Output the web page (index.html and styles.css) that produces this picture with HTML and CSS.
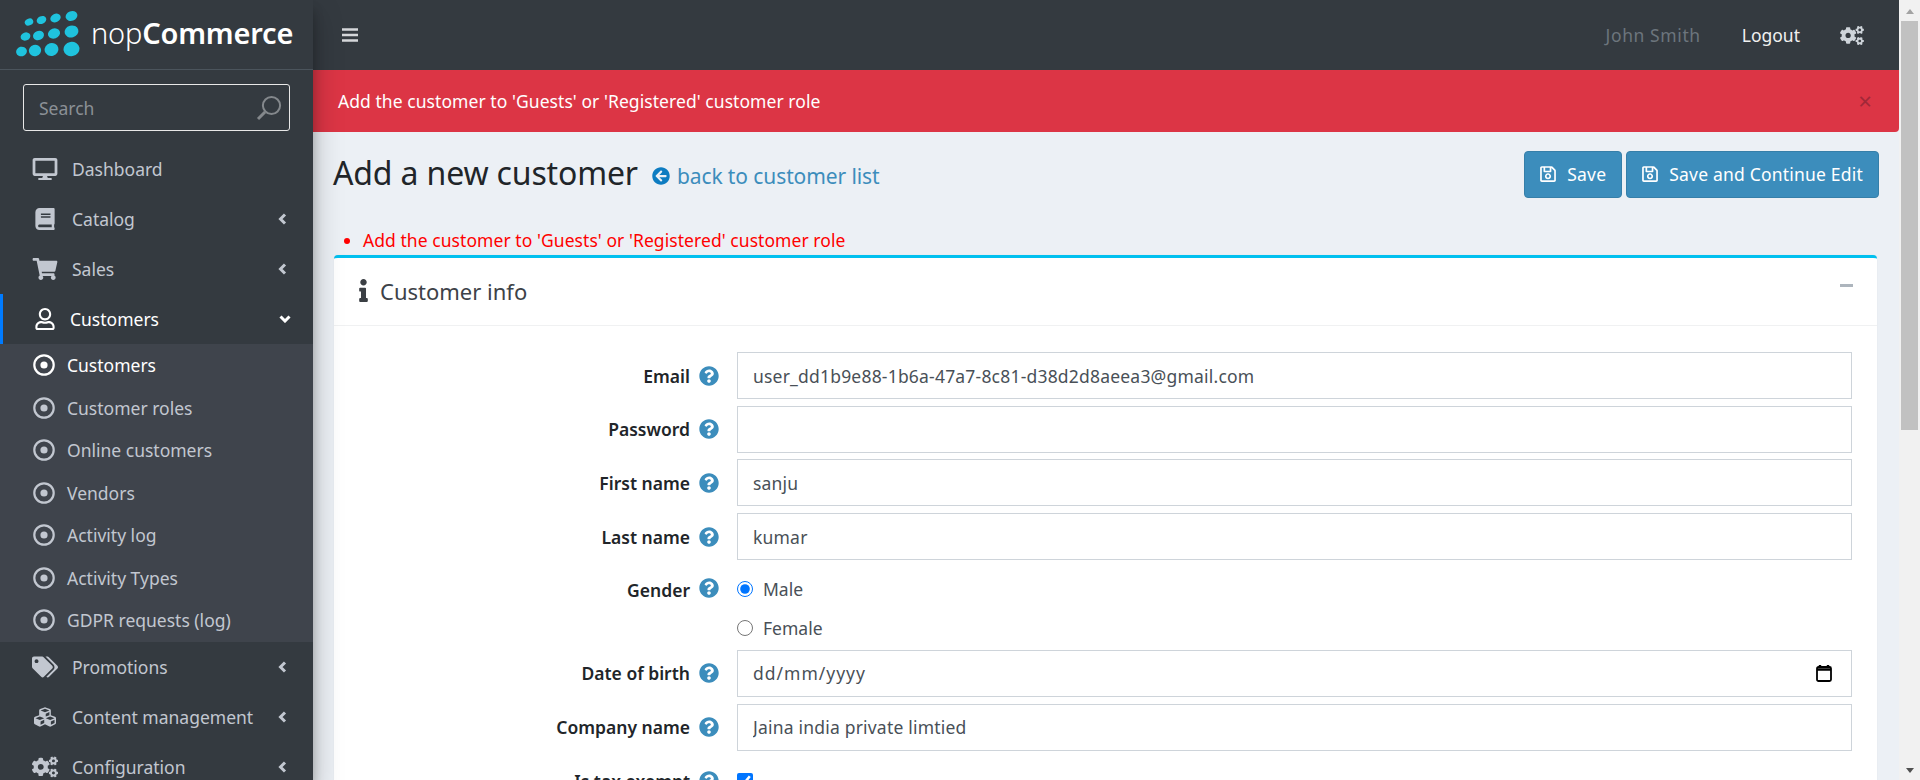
FILE: index.html
```html
<!DOCTYPE html>
<html lang="en">
<head>
    <meta charset="UTF-8">
    <meta name="viewport" content="width=device-width, initial-scale=1.0">
    <title>Add a new customer</title>
    <link rel="stylesheet" href="styles.css">
</head>
<body>
    <svg class="icon-sheet" xmlns="http://www.w3.org/2000/svg">
        <symbol id="i-desktop" viewBox="0 0 576 512"><path d="M528 0H48C21.5 0 0 21.5 0 48v320c0 26.5 21.5 48 48 48h192l-16 48h-72c-13.3 0-24 10.7-24 24s10.7 24 24 24h272c13.3 0 24-10.7 24-24s-10.7-24-24-24h-72l-16-48h192c26.5 0 48-21.5 48-48V48c0-26.5-21.5-48-48-48zm-16 352H64V64h448v288z"/></symbol>
        <symbol id="i-book" viewBox="0 0 448 512"><path d="M448 360V24c0-13.3-10.7-24-24-24H96C43 0 0 43 0 96v320c0 53 43 96 96 96h328c13.3 0 24-10.7 24-24v-16c0-7.5-3.5-14.3-8.9-18.7-4.2-15.4-4.2-59.3 0-74.7 5.4-4.3 8.9-11.1 8.9-18.6zM128 134c0-3.3 2.7-6 6-6h212c3.3 0 6 2.7 6 6v20c0 3.3-2.7 6-6 6H134c-3.3 0-6-2.7-6-6v-20zm0 64c0-3.3 2.7-6 6-6h212c3.3 0 6 2.7 6 6v20c0 3.3-2.7 6-6 6H134c-3.3 0-6-2.7-6-6v-20zm253.4 250H96c-17.7 0-32-14.3-32-32 0-17.6 14.4-32 32-32h285.4c-1.9 17.1-1.9 46.9 0 64z"/></symbol>
        <symbol id="i-cart" viewBox="0 0 576 512"><path d="M528.12 301.319l47.273-208C578.806 78.301 567.391 64 551.99 64H159.208l-9.166-44.81C147.758 8.021 137.93 0 126.529 0H24C10.745 0 0 10.745 0 24v16c0 13.255 10.745 24 24 24h69.883l70.248 343.435C147.325 417.1 136 435.222 136 456c0 30.928 25.072 56 56 56s56-25.072 56-56c0-15.674-6.447-29.835-16.824-40h209.647C430.447 426.165 424 440.326 424 456c0 30.928 25.072 56 56 56s56-25.072 56-56c0-22.172-12.888-41.332-31.579-50.405l5.517-24.276c3.413-15.018-8.002-29.319-23.403-29.319H218.117l-6.545-32h293.145c11.206 0 20.92-7.754 23.403-18.681z"/></symbol>
        <symbol id="i-user" viewBox="0 0 448 512"><path d="M313.6 304c-28.7 0-42.5 16-89.6 16-47.1 0-60.8-16-89.6-16C60.2 304 0 364.2 0 438.4V464c0 26.5 21.5 48 48 48h352c26.5 0 48-21.5 48-48v-25.6c0-74.2-60.2-134.4-134.4-134.4zM400 464H48v-25.6c0-47.6 38.8-86.4 86.4-86.4 14.6 0 38.3 16 89.6 16 51.7 0 74.9-16 89.6-16 47.6 0 86.4 38.8 86.4 86.4V464zM224 288c79.5 0 144-64.5 144-144S303.5 0 224 0 80 64.5 80 144s64.5 144 144 144zm0-240c52.9 0 96 43.1 96 96s-43.1 96-96 96-96-43.1-96-96 43.1-96 96-96z"/></symbol>
        <symbol id="i-tags" viewBox="0 0 640 512"><path d="M497.941 225.941L286.059 14.059A48 48 0 0 0 252.118 0H48C21.49 0 0 21.49 0 48v204.118a48 48 0 0 0 14.059 33.941l211.882 211.882c18.744 18.745 49.136 18.746 67.882 0l204.118-204.118c18.745-18.745 18.745-49.137 0-67.882zM112 160c-26.51 0-48-21.49-48-48s21.49-48 48-48 48 21.49 48 48-21.49 48-48 48zm513.941 133.823L421.823 497.941c-18.745 18.745-49.137 18.745-67.882 0l-.36-.36L527.64 323.522c16.999-16.999 26.36-39.6 26.36-63.64s-9.362-46.641-26.36-63.64L331.397 0h48.721a48 48 0 0 1 33.941 14.059l211.882 211.882c18.745 18.745 18.745 49.137 0 67.882z"/></symbol>
        <symbol id="i-cubes" viewBox="0 0 512 512"><path d="M488.6 250.2L392 214V105.5c0-15-9.3-28.4-23.4-33.7l-100-37.5c-8.1-3.1-17.1-3.1-25.3 0l-100 37.5c-14.1 5.3-23.4 18.7-23.4 33.7V214l-96.6 36.2C9.3 255.5 0 268.9 0 283.9V394c0 13.6 7.7 26.1 19.9 32.2l100 50c10.1 5.1 22.1 5.1 32.2 0l103.9-52 103.9 52c10.1 5.1 22.1 5.1 32.2 0l100-50c12.2-6.1 19.9-18.6 19.9-32.2V283.9c0-15-9.3-28.4-23.4-33.7zM358 214.8l-85 31.9v-68.2l85-37v73.3zM154 104.1l102-38.2 102 38.2v.6l-102 41.4-102-41.4v-.6zm84 291.1l-85 42.5v-79.1l85-38.8v75.4zm0-112l-102 41.4-102-41.4v-.6l102-38.2 102 38.2v.6zm240 112l-85 42.5v-79.1l85-38.8v75.4zm0-112l-102 41.4-102-41.4v-.6l102-38.2 102 38.2v.6z"/></symbol>
        <symbol id="i-cogs" viewBox="0 0 640 512"><path d="M512.1 191l-8.2 14.3c-3 5.3-9.4 7.5-15.1 5.4-11.8-4.4-22.6-10.7-32.1-18.6-4.6-3.8-5.8-10.5-2.8-15.7l8.2-14.3c-6.9-8-12.3-17.3-15.9-27.4h-16.5c-6 0-11.2-4.3-12.2-10.3-2-12-2.1-24.6 0-37.1 1-6 6.2-10.4 12.2-10.4h16.5c3.6-10.1 9-19.4 15.9-27.4l-8.2-14.3c-3-5.2-1.9-11.9 2.8-15.7 9.5-7.9 20.4-14.2 32.1-18.6 5.7-2.1 12.1.1 15.1 5.4l8.2 14.3c10.5-1.9 21.2-1.9 31.7 0L552 6.3c3-5.3 9.4-7.5 15.1-5.4 11.8 4.4 22.6 10.7 32.1 18.6 4.6 3.8 5.8 10.5 2.8 15.7l-8.2 14.3c6.9 8 12.3 17.3 15.9 27.4h16.5c6 0 11.2 4.3 12.2 10.3 2 12 2.1 24.6 0 37.1-1 6-6.2 10.4-12.2 10.4h-16.5c-3.6 10.1-9 19.4-15.9 27.4l8.2 14.3c3 5.2 1.9 11.9-2.8 15.7-9.5 7.9-20.4 14.2-32.1 18.6-5.7 2.1-12.1-.1-15.1-5.4l-8.2-14.3c-10.4 1.9-21.2 1.9-31.7 0zm-10.5-58.8c38.5 29.6 82.4-14.3 52.8-52.8-38.5-29.7-82.4 14.3-52.8 52.8zM386.3 286.1l33.7 16.8c10.1 5.8 14.5 18.1 10.5 29.1-8.9 24.2-26.4 46.4-42.6 65.8-7.4 8.9-20.2 11.1-30.3 5.3l-29.1-16.8c-16 13.7-34.6 24.6-54.9 31.7v33.6c0 11.6-8.3 21.6-19.7 23.6-24.6 4.2-50.4 4.4-75.9 0-11.5-2-20-11.9-20-23.6V418c-20.3-7.2-38.9-18-54.9-31.7L74 403c-10 5.8-22.9 3.6-30.3-5.3-16.2-19.4-33.3-41.6-42.2-65.7-4-10.9.4-23.2 10.5-29.1l33.3-16.8c-3.9-20.9-3.9-42.4 0-63.4L12 205.8c-10.1-5.8-14.6-18.1-10.5-29 8.9-24.2 26-46.4 42.2-65.8 7.4-8.9 20.2-11.1 30.3-5.3l29.1 16.8c16-13.7 34.6-24.6 54.9-31.7V57.1c0-11.5 8.2-21.5 19.6-23.5 24.6-4.2 50.5-4.4 76-.1 11.5 2 20 11.9 20 23.6v33.6c20.3 7.2 38.9 18 54.9 31.7l29.1-16.8c10-5.8 22.9-3.6 30.3 5.3 16.2 19.4 33.2 41.6 42.1 65.8 4 10.9.1 23.2-10 29.1l-33.7 16.8c3.9 21 3.9 42.5 0 63.5zm-117.6 21.1c59.2-77-28.7-164.9-105.7-105.7-59.2 77 28.7 164.9 105.7 105.7zm243.4 182.7l-8.2 14.3c-3 5.3-9.4 7.5-15.1 5.4-11.8-4.4-22.6-10.7-32.1-18.6-4.6-3.8-5.8-10.5-2.8-15.7l8.2-14.3c-6.9-8-12.3-17.3-15.9-27.4h-16.5c-6 0-11.2-4.3-12.2-10.3-2-12-2.1-24.6 0-37.1 1-6 6.2-10.4 12.2-10.4h16.5c3.6-10.1 9-19.4 15.9-27.4l-8.2-14.3c-3-5.2-1.9-11.9 2.8-15.7 9.5-7.9 20.4-14.2 32.1-18.6 5.7-2.1 12.1.1 15.1 5.4l8.2 14.3c10.5-1.9 21.2-1.9 31.7 0l8.2-14.3c3-5.3 9.4-7.5 15.1-5.4 11.8 4.4 22.6 10.7 32.1 18.6 4.6 3.8 5.8 10.5 2.8 15.7l-8.2 14.3c6.9 8 12.3 17.3 15.9 27.4h16.5c6 0 11.2 4.3 12.2 10.3 2 12 2.1 24.6 0 37.1-1 6-6.2 10.4-12.2 10.4h-16.5c-3.6 10.1-9 19.4-15.9 27.4l8.2 14.3c3 5.2 1.9 11.9-2.8 15.7-9.5 7.9-20.4 14.2-32.1 18.6-5.7 2.1-12.1-.1-15.1-5.4l-8.2-14.3c-10.4 1.9-21.2 1.9-31.7 0zM501.6 431c38.5 29.6 82.4-14.3 52.8-52.8-38.5-29.6-82.4 14.3-52.8 52.8z"/></symbol>
        <symbol id="i-info" viewBox="0 0 192 512"><path d="M20 424.229h20V279.771H20c-11.046 0-20-8.954-20-20V212c0-11.046 8.954-20 20-20h112c11.046 0 20 8.954 20 20v212.229h20c11.046 0 20 8.954 20 20V492c0 11.046-8.954 20-20 20H20c-11.046 0-20-8.954-20-20v-47.771c0-11.046 8.954-20 20-20zM96 0C56.235 0 24 32.235 24 72s32.235 72 72 72 72-32.235 72-72S135.764 0 96 0z"/></symbol>
        <symbol id="i-help" viewBox="0 0 512 512"><path d="M504 256c0 136.997-111.043 248-248 248S8 392.997 8 256C8 119.083 119.043 8 256 8s248 111.083 248 248zM262.655 90c-54.497 0-89.255 22.957-116.549 63.758-3.536 5.286-2.353 12.415 2.715 16.258l34.699 26.31c5.205 3.947 12.621 3.008 16.665-2.122 17.864-22.658 30.113-35.797 57.303-35.797 20.429 0 45.698 13.148 45.698 32.958 0 14.976-12.363 22.667-32.534 33.976C247.128 238.528 216 254.941 216 296v4c0 6.627 5.373 12 12 12h56c6.627 0 12-5.373 12-12v-1.333c0-28.462 83.186-29.647 83.186-106.667 0-58.002-60.165-102-116.531-102zM256 338c-25.365 0-46 20.635-46 46 0 25.364 20.635 46 46 46s46-20.636 46-46c0-25.365-20.635-46-46-46z"/></symbol>
        <symbol id="i-back" viewBox="0 0 512 512"><path d="M256 504C119 504 8 393 8 256S119 8 256 8s248 111 248 248-111 248-248 248zm28.9-143.6L209.4 288H392c13.3 0 24-10.7 24-24v-16c0-13.3-10.7-24-24-24H209.4l75.5-72.4c9.7-9.3 9.9-24.8.4-34.3l-11-10.9c-9.4-9.4-24.6-9.4-33.9 0L107.7 239c-9.4 9.4-9.4 24.6 0 33.9l132.7 132.7c9.4 9.4 24.6 9.4 33.9 0l11-10.9c9.5-9.5 9.3-25-.4-34.3z"/></symbol>
        <symbol id="i-save" viewBox="0 0 448 512"><path d="M433.941 129.941l-83.882-83.882A48 48 0 0 0 316.118 32H48C21.49 32 0 53.49 0 80v352c0 26.51 21.49 48 48 48h352c26.51 0 48-21.49 48-48V163.882a48 48 0 0 0-14.059-33.941zM272 80v80H144V80h128zm122 352H54a6 6 0 0 1-6-6V86a6 6 0 0 1 6-6h42v104c0 13.255 10.745 24 24 24h176c13.255 0 24-10.745 24-24V83.882l78.243 78.243a6 6 0 0 1 1.757 4.243V426a6 6 0 0 1-6 6zM224 232c-48.523 0-88 39.477-88 88s39.477 88 88 88 88-39.477 88-88-39.477-88-88-88zm0 128c-22.056 0-40-17.944-40-40s17.944-40 40-40 40 17.944 40 40-17.944 40-40 40z"/></symbol>
        <symbol id="i-left" viewBox="0 0 9 12"><path d="M7 1.500 2.500 6 7 10.500" fill="none" stroke="currentColor" stroke-width="3"/></symbol>
        <symbol id="i-down" viewBox="0 0 12 8"><path d="M1.500 1.500 6 6l4.500-4.500" fill="none" stroke="currentColor" stroke-width="3"/></symbol>
        <symbol id="i-dot" viewBox="0 0 22 22"><circle cx="11" cy="11" r="9.7" fill="none" stroke="currentColor" stroke-width="2.2"/><circle cx="11" cy="11" r="3.6"/></symbol>
    </svg>

    <div class="page">
        <aside class="sidebar">
            <div class="brand">
                <svg class="brand-dots" viewBox="0 0 64 48">
                    <ellipse cx="55.5" cy="5" rx="6" ry="4.8" transform="rotate(-20 55.5 5)"/>
                    <ellipse cx="39.5" cy="7" rx="5.4" ry="4.2" transform="rotate(-25 39.5 7)"/>
                    <ellipse cx="25.5" cy="9" rx="5" ry="3.8" transform="rotate(-25 25.5 9)"/>
                    <ellipse cx="13" cy="11" rx="4.4" ry="3.4" transform="rotate(-25 13 11)"/>
                    <ellipse cx="55.5" cy="20.5" rx="7" ry="6" transform="rotate(-15 55.5 20.5)"/>
                    <ellipse cx="38" cy="22.5" rx="6.2" ry="5" transform="rotate(-20 38 22.5)"/>
                    <ellipse cx="22.5" cy="24.5" rx="5.6" ry="4.6" transform="rotate(-20 22.5 24.5)"/>
                    <ellipse cx="9.5" cy="25.5" rx="5" ry="4" transform="rotate(-20 9.5 25.5)"/>
                    <ellipse cx="55.5" cy="38" rx="8" ry="7.2" transform="rotate(-10 55.5 38)"/>
                    <ellipse cx="35.5" cy="38.5" rx="7" ry="6.4" transform="rotate(-15 35.5 38.5)"/>
                    <ellipse cx="19" cy="39.5" rx="6.2" ry="5.6" transform="rotate(-15 19 39.5)"/>
                    <ellipse cx="5.5" cy="40.5" rx="5.4" ry="4.8" transform="rotate(-15 5.5 40.5)"/>
                </svg>
                <span class="brand-name">nop<b>Commerce</b></span>
            </div>

            <div class="search-box">
                <span>Search</span>
                <svg class="search-icon" viewBox="0 0 26 26"><circle cx="15.5" cy="10.5" r="8.6"/><path d="M9 17 2 24"/></svg>
            </div>

            <nav>
                <a class="nav-item"><svg class="nav-icon"><use href="#i-desktop"/></svg><span>Dashboard</span></a>
                <a class="nav-item"><svg class="nav-icon"><use href="#i-book"/></svg><span>Catalog</span><svg class="nav-arrow"><use href="#i-left"/></svg></a>
                <a class="nav-item"><svg class="nav-icon"><use href="#i-cart"/></svg><span>Sales</span><svg class="nav-arrow"><use href="#i-left"/></svg></a>
                <a class="nav-item active"><svg class="nav-icon"><use href="#i-user"/></svg><span>Customers</span><svg class="nav-arrow down"><use href="#i-down"/></svg></a>
                <div class="subnav">
                    <a class="sub-item active"><svg><use href="#i-dot"/></svg>Customers</a>
                    <a class="sub-item"><svg><use href="#i-dot"/></svg>Customer roles</a>
                    <a class="sub-item"><svg><use href="#i-dot"/></svg>Online customers</a>
                    <a class="sub-item"><svg><use href="#i-dot"/></svg>Vendors</a>
                    <a class="sub-item"><svg><use href="#i-dot"/></svg>Activity log</a>
                    <a class="sub-item"><svg><use href="#i-dot"/></svg>Activity Types</a>
                    <a class="sub-item"><svg><use href="#i-dot"/></svg>GDPR requests (log)</a>
                </div>
                <a class="nav-item"><svg class="nav-icon"><use href="#i-tags"/></svg><span>Promotions</span><svg class="nav-arrow"><use href="#i-left"/></svg></a>
                <a class="nav-item"><svg class="nav-icon"><use href="#i-cubes"/></svg><span>Content management</span><svg class="nav-arrow"><use href="#i-left"/></svg></a>
                <a class="nav-item"><svg class="nav-icon"><use href="#i-cogs"/></svg><span>Configuration</span><svg class="nav-arrow"><use href="#i-left"/></svg></a>
            </nav>
        </aside>

        <div class="main">
            <header class="topbar">
                <svg class="menu-toggle" viewBox="0 0 16 14"><path d="M0 1.500h16M0 7h16M0 12.500h16"/></svg>
                <div class="topbar-right">
                    <span class="user-name">John Smith</span>
                    <span class="logout">Logout</span>
                    <svg class="top-cogs"><use href="#i-cogs"/></svg>
                </div>
            </header>

            <div class="alert">
                <span>Add the customer to 'Guests' or 'Registered' customer role</span>
                <span class="alert-close">&times;</span>
            </div>

            <div class="content">
                <div class="content-head">
                    <h1>Add a new customer</h1>
                    <a class="back-link"><svg><use href="#i-back"/></svg>back to customer list</a>
                    <div class="actions">
                        <button class="btn"><svg><use href="#i-save"/></svg>Save</button>
                        <button class="btn"><svg><use href="#i-save"/></svg>Save and Continue Edit</button>
                    </div>
                </div>

                <ul class="errors">
                    <li>Add the customer to 'Guests' or 'Registered' customer role</li>
                </ul>

                <section class="card">
                    <div class="card-head">
                        <svg class="card-icon"><use href="#i-info"/></svg>
                        <h2>Customer info</h2>
                        <span class="collapse-bar"></span>
                    </div>
                    <div class="card-body">
                        <div class="form-row">
                            <label>Email</label><svg class="help"><use href="#i-help"/></svg>
                            <input type="text" value="user_dd1b9e88-1b6a-47a7-8c81-d38d2d8aeea3@gmail.com">
                        </div>
                        <div class="form-row">
                            <label>Password</label><svg class="help"><use href="#i-help"/></svg>
                            <input type="text">
                        </div>
                        <div class="form-row">
                            <label>First name</label><svg class="help"><use href="#i-help"/></svg>
                            <input type="text" value="sanju">
                        </div>
                        <div class="form-row">
                            <label>Last name</label><svg class="help"><use href="#i-help"/></svg>
                            <input type="text" value="kumar">
                        </div>
                        <div class="form-row gender-row">
                            <label>Gender</label><svg class="help"><use href="#i-help"/></svg>
                            <div class="radios">
                                <div class="radio-line"><input type="radio" name="gender" checked><span>Male</span></div>
                                <div class="radio-line"><input type="radio" name="gender"><span>Female</span></div>
                            </div>
                        </div>
                        <div class="form-row">
                            <label>Date of birth</label><svg class="help"><use href="#i-help"/></svg>
                            <div class="date-field">
                                <span>dd/mm/yyyy</span>
                                <svg viewBox="0 0 16 18"><rect x="1" y="3" width="14" height="14" rx="1.500"/><path d="M1 5.500h14M4 1v3M12 1v3"/></svg>
                            </div>
                        </div>
                        <div class="form-row">
                            <label>Company name</label><svg class="help"><use href="#i-help"/></svg>
                            <input type="text" value="Jaina india private limtied">
                        </div>
                        <div class="form-row tax-row">
                            <label>Is tax exempt</label><svg class="help"><use href="#i-help"/></svg>
                            <input type="checkbox" checked>
                        </div>
                    </div>
                </section>
            </div>
        </div>

        <div class="scrollbar">
            <span class="arrow-up"></span>
            <div class="scroll-thumb"></div>
            <span class="arrow-down"></span>
        </div>
    </div>
</body>
</html>
```

FILE: styles.css
```css
html, body {
    height: 100%;
    margin: 0;
    overflow: hidden;
    font-family: "Noto Sans", "Open Sans", Arial, sans-serif;
    font-size: 17.5px;
    color: #212529;
}
.icon-sheet {
    display: none;
}
.page {
    display: flex;
    height: 780px;
    overflow: hidden;
}

/* sidebar */
.sidebar {
    width: 313px;
    flex: none;
    background-color: #343a40;
    color: #c2c7d0;
    box-shadow: 0 14px 28px rgba(0,0,0,0.25), 0 10px 10px rgba(0,0,0,0.22);
    position: relative;
    z-index: 2;
}
.brand {
    height: 70px;
    box-sizing: border-box;
    border-bottom: 1px solid #4b545c;
    display: flex;
    align-items: center;
    padding-left: 16px;
}
.brand-dots {
    width: 64px;
    height: 48px;
    fill: #1fc3de;
    flex: none;
}
.brand-name {
    font-size: 29px;
    color: #fff;
    margin-left: 11px;
    letter-spacing: -0.2px;
    font-weight: 300;
    margin-top: -5px;
}
.brand-name b {
    font-weight: 600;
}
.search-box {
    margin: 14px 23px 0;
    height: 47px;
    box-sizing: border-box;
    border: 1px solid #e8e8e8;
    border-radius: 3px;
    display: flex;
    align-items: center;
    justify-content: space-between;
    padding: 0 7px 0 15px;
    color: #8b9096;
}
.search-icon {
    width: 26px;
    height: 26px;
    fill: none;
    stroke: #84888c;
    stroke-width: 2;
}
.search-icon path {
    stroke-width: 3;
}
nav {
    margin-top: 13px;
}
.nav-item {
    height: 50px;
    display: flex;
    align-items: center;
    padding-left: 32px;
    box-sizing: border-box;
}
.nav-icon {
    width: 26px;
    height: 22px;
    fill: #c2c7d0;
    flex: none;
    margin-right: 14px;
}
.nav-item span {
    flex: 1;
    white-space: nowrap;
}
.nav-arrow {
    width: 9px;
    height: 12px;
    color: #c2c7d0;
    margin-right: 26px;
    flex: none;
}
.nav-arrow.down {
    width: 12px;
    height: 8px;
    color: #fff;
    margin-right: 22px;
}
.nav-item.active {
    color: #fff;
    border-left: 3px solid #007bff;
    padding-left: 29px;
}
.nav-item.active .nav-icon {
    fill: #fff;
    margin-right: 12px;
}
.subnav {
    background-color: #3f444c;
}
.sub-item {
    height: 42.5px;
    display: flex;
    align-items: center;
    padding-left: 33px;
}
.sub-item svg {
    width: 22px;
    height: 22px;
    fill: currentColor;
    margin-right: 12px;
}
.sub-item.active {
    color: #fff;
}

/* main */
.main {
    flex: 1;
    min-width: 0;
    display: flex;
    flex-direction: column;
    background-color: #ecf0f5;
}
.topbar {
    height: 70px;
    flex: none;
    background-color: #343a40;
    display: flex;
    align-items: center;
    padding-left: 29px;
}
.menu-toggle {
    width: 16px;
    height: 14px;
    fill: none;
    stroke: #d5d7da;
    stroke-width: 2.5;
}
.topbar-right {
    margin-left: auto;
    display: flex;
    align-items: center;
    padding-right: 35px;
}
.user-name {
    color: #6c757d;
    margin-right: 41px;
    letter-spacing: 0.6px;
}
.logout {
    color: #f0f0f0;
    margin-right: 40px;
}
.top-cogs {
    width: 24px;
    height: 19px;
    fill: #ced4da;
}
.alert {
    height: 62px;
    flex: none;
    background-color: #dc3545;
    color: #fff;
    border-bottom-right-radius: 4px;
    display: flex;
    align-items: center;
    justify-content: space-between;
    padding: 0 27px 0 25px;
    letter-spacing: 0.06px;
}
.alert-close {
    font-size: 24px;
    color: #a12838;
    line-height: 1;
}
.content {
    flex: 1;
    padding: 0 20px 0 20px;
}
.content-head {
    display: flex;
    align-items: center;
    height: 84px;
}
h1 {
    font-size: 32px;
    font-weight: 400;
    margin: -4px 0 0;
    letter-spacing: -0.15px;
}
.back-link {
    color: #3c8dbc;
    font-size: 21px;
    margin-left: 14px;
    margin-top: 4px;
    display: flex;
    align-items: center;
    letter-spacing: -0.1px;
}
.back-link svg {
    width: 18px;
    height: 18px;
    fill: #0d7cc1;
    margin-right: 7px;
}
.actions {
    margin-left: auto;
    display: flex;
    gap: 4px;
}
.btn {
    height: 47px;
    box-sizing: border-box;
    background-color: #3c8dbc;
    border: 1px solid #367fa9;
    border-radius: 4px;
    color: #fff;
    font: inherit;
    letter-spacing: 0.2px;
    padding: 0 15px;
    display: flex;
    align-items: center;
}
.btn svg {
    width: 16px;
    height: 18px;
    fill: #fff;
    margin-right: 11px;
}
.errors {
    margin: 0;
    padding: 0 0 0 29px;
    color: #ff0000;
    height: 39px;
    list-style: disc;
    display: flex;
    align-items: flex-end;
    letter-spacing: 0.06px;
}
.errors li {
    line-height: 30px;
    display: list-item;
    margin-left: 1px;
}

/* card */
.card {
    background-color: #fff;
    border-top: 3px solid #00c0ef;
    border-radius: 4px 4px 0 0;
    box-shadow: 0 0 1px rgba(0,0,0,0.125);
    height: 600px;
    margin: 0 2px 0 1px;
}
.card-head {
    height: 68px;
    box-sizing: border-box;
    border-bottom: 1px solid #f0f1f2;
    display: flex;
    align-items: center;
    padding: 0 24px 2px 25px;
}
.card-icon {
    width: 9px;
    height: 23px;
    fill: #3b3f44;
    margin-right: 12px;
}
h2 {
    font-size: 22px;
    font-weight: 400;
    margin: 0;
    color: #3d4248;
}
.collapse-bar {
    margin-left: auto;
    margin-top: -11px;
    width: 13px;
    height: 3px;
    background-color: #adb5bd;
}
.card-body {
    padding-top: 26px;
}
.form-row {
    display: flex;
    align-items: center;
    height: 47px;
    margin-bottom: 6.7px;
}
.form-row label {
    width: 356px;
    text-align: right;
    font-weight: 600;
    flex: none;
    margin-right: 9px;
}
.help {
    width: 20px;
    height: 20px;
    fill: #3c8dbc;
    flex: none;
    margin-right: 18px;
}
.form-row input[type="text"], .date-field {
    width: 1115px;
    height: 47px;
    box-sizing: border-box;
    border: 1px solid #ced4da;
    padding: 0 15px;
    font: inherit;
    letter-spacing: 0.2px;
    color: #495057;
    outline: none;
}
.date-field {
    display: flex;
    align-items: center;
    justify-content: space-between;
    padding-right: 19px;
}
.date-field span {
    letter-spacing: 1px;
}
.date-field svg {
    width: 16px;
    height: 18px;
    fill: #fff;
    stroke: #000;
    stroke-width: 1.8;
}
.date-field svg path {
    stroke-width: 2.4;
}
.gender-row {
    height: 81px;
    align-items: flex-start;
    margin-bottom: 2.2px;
}
.gender-row label, .gender-row .help {
    margin-top: 11px;
}
.radios {
    padding-top: 11px;
}
.radio-line {
    display: flex;
    align-items: center;
    height: 39px;
    margin-top: -8px;
    color: #495057;
}
.radio-line + .radio-line {
    margin-top: 0;
}
.radio-line input {
    margin: 0 10px 0 0;
    width: 16px;
    height: 16px;
}
.tax-row input {
    margin: 0;
    width: 16px;
    height: 16px;
}

/* scrollbar */
.scrollbar {
    width: 21px;
    flex: none;
    background-color: #f1f1f1;
    display: flex;
    flex-direction: column;
    align-items: center;
    position: relative;
    z-index: 3;
}
.arrow-up, .arrow-down {
    width: 0;
    height: 0;
    border-left: 4.5px solid transparent;
    border-right: 4.5px solid transparent;
}
.arrow-up {
    border-bottom: 5px solid #a3a3a3;
    margin: 9px 0 7px;
}
.arrow-down {
    border-top: 5px solid #505050;
    margin-top: auto;
    margin-bottom: 7px;
}
.scroll-thumb {
    width: 17px;
    height: 409px;
    background-color: #c1c1c1;
}
```
